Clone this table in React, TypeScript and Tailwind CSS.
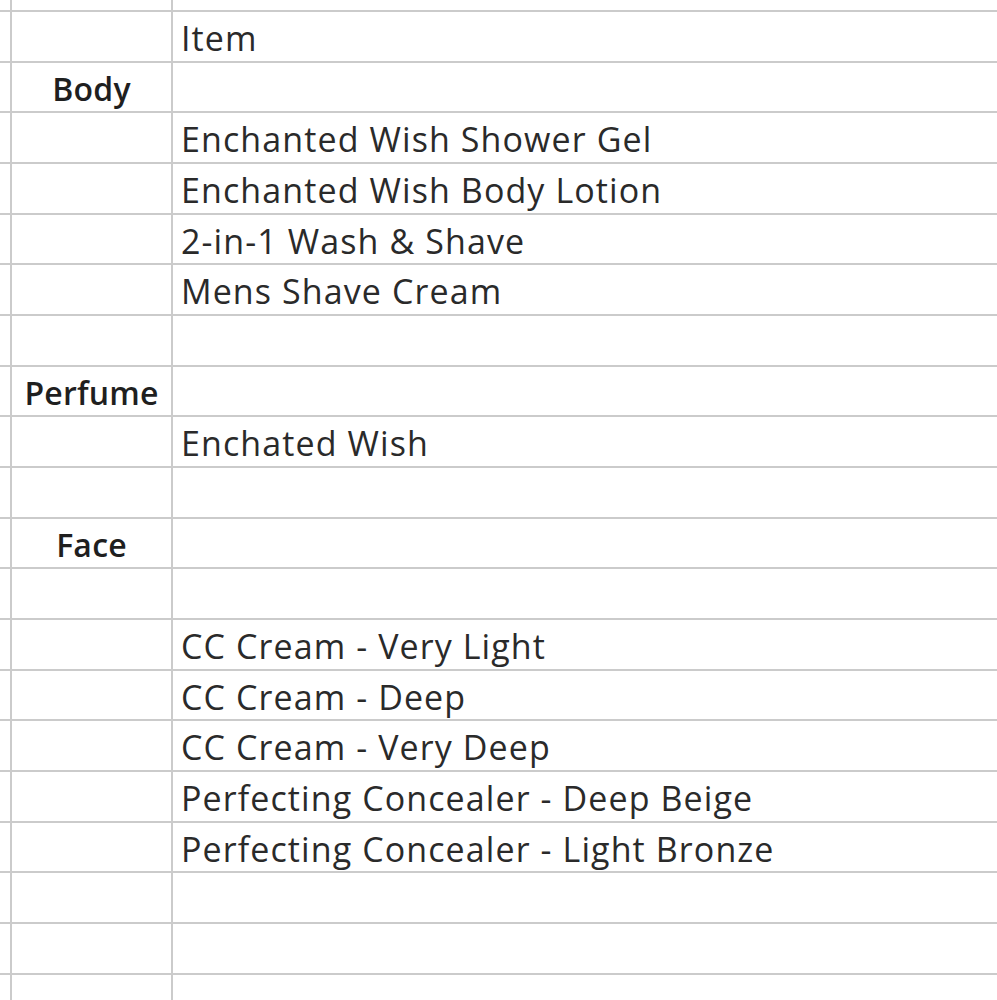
const rows: { label?: string; item?: string }[] = [
  { item: "Item" },
  { label: "Body" },
  { item: "Enchanted Wish Shower Gel" },
  { item: "Enchanted Wish Body Lotion" },
  { item: "2-in-1 Wash & Shave" },
  { item: "Mens Shave Cream" },
  {},
  { label: "Perfume" },
  { item: "Enchated Wish" },
  {},
  { label: "Face" },
  {},
  { item: "CC Cream - Very Light" },
  { item: "CC Cream - Deep" },
  { item: "CC Cream - Very Deep" },
  { item: "Perfecting Concealer - Deep Beige" },
  { item: "Perfecting Concealer - Light Bronze" },
  {},
  {},
];

function Row({ label, item, last }: { label?: string; item?: string; last?: boolean }) {
  return (
    <div
      className={
        last
          ? "flex h-[27px] shrink-0 border-t-2 border-[#cbcbcb]"
          : "flex h-[50.68px] shrink-0 border-t-2 border-[#cbcbcb]"
      }
    >
      <div className="w-[12px] shrink-0 border-r-2 border-[#cbcbcb]" />
      <div className="flex w-[161px] shrink-0 items-center justify-center border-r-2 border-[#cbcbcb] pt-[3px] text-[32px] font-semibold tracking-[0.2px] text-[#1f1f1f]">
        {label}
      </div>
      <div className="flex flex-1 items-center pl-[8px] pt-[3px] text-[34px] tracking-[1.1px] text-[#2a2a2a]">
        {item}
      </div>
    </div>
  );
}

export default function App() {
  return (
    <div
      className="flex h-[1000px] w-[997px] flex-col overflow-hidden bg-white leading-none"
      style={{ fontFamily: "'Open Sans', Lato, sans-serif" }}
    >
      <div className="flex h-[10px] shrink-0">
        <div className="w-[12px] shrink-0 border-r-2 border-[#cbcbcb]" />
        <div className="w-[161px] shrink-0 border-r-2 border-[#cbcbcb]" />
      </div>
      {rows.map((r, i) => (
        <Row key={i} label={r.label} item={r.item} />
      ))}
      <Row last />
    </div>
  );
}
